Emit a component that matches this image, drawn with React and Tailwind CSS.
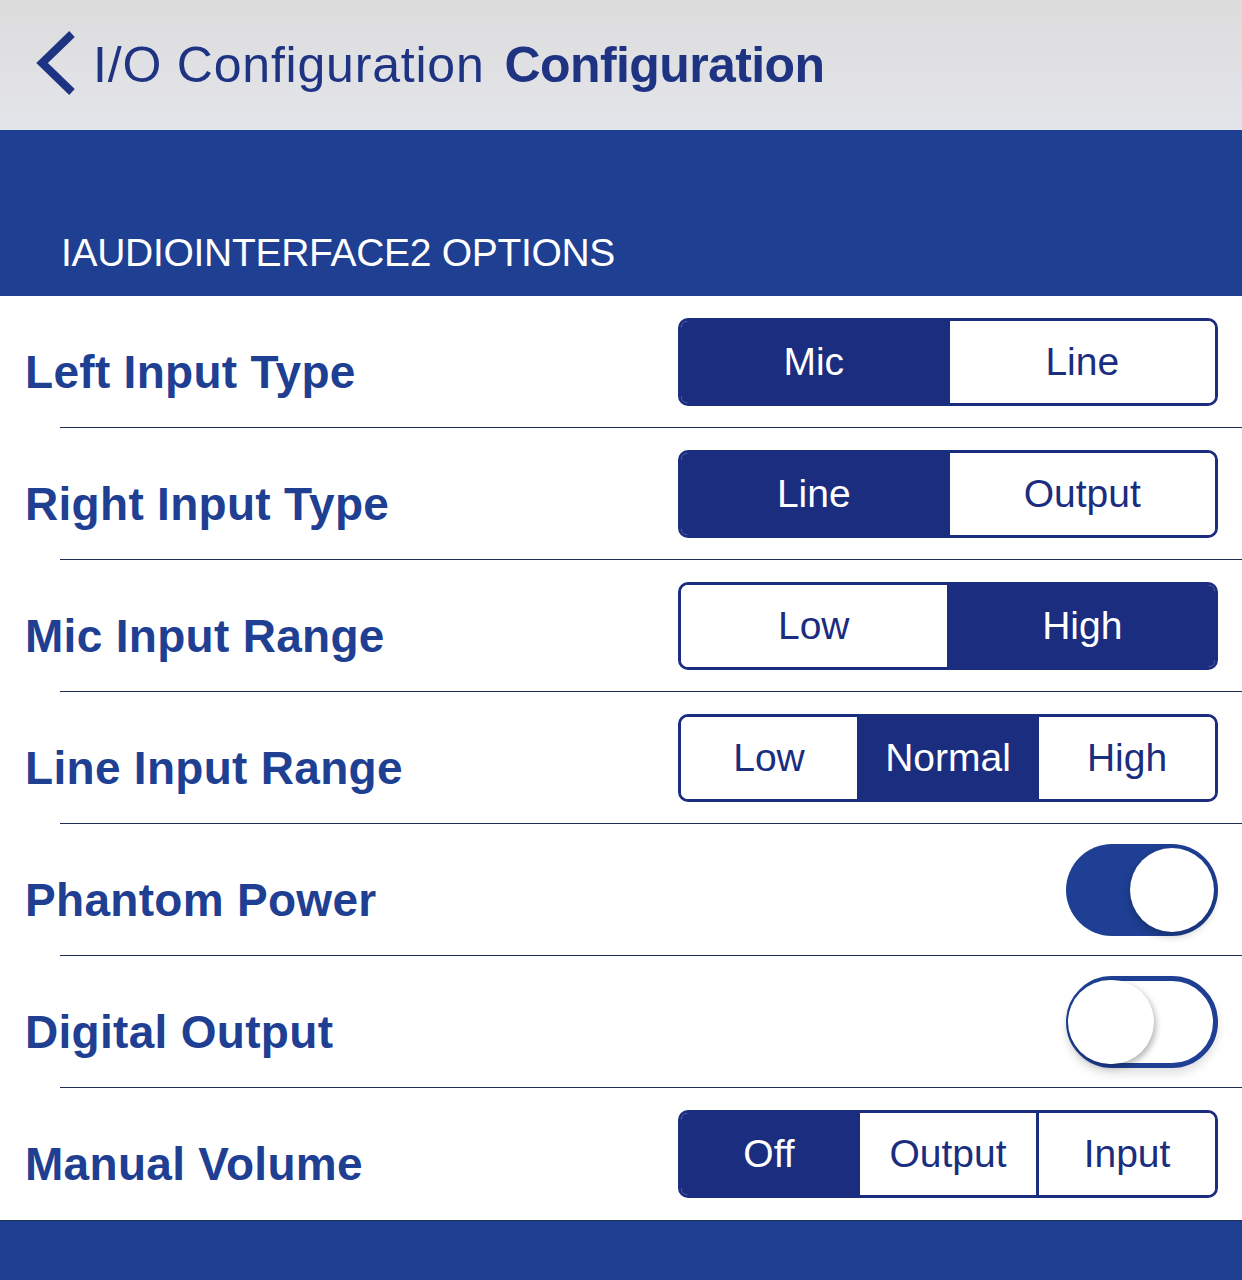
import React from "react";

function Segmented({ options, active }) {
  return (
    <div className="flex h-[88px] w-[540px] overflow-hidden rounded-[10px] border-[3px] border-[#1a2d7f]">
      {options.map((o, i) => (
        <div
          key={o}
          className={
            "flex flex-1 items-center justify-center text-[39px] " +
            (i > 0 ? "border-l-[3px] border-[#1a2d7f] " : "") +
            (i === active ? "bg-[#1a2d7f] text-white" : "bg-white text-[#1a2d7f]")
          }
        >
          {o}
        </div>
      ))}
    </div>
  );
}

function Toggle({ on }) {
  return on ? (
    <div className="flex h-[92px] w-[152px] items-center justify-end rounded-full bg-[#1e3f94] pr-[4px]">
      <div className="h-[84px] w-[84px] rounded-full bg-white shadow-[0_4px_8px_rgba(0,0,0,0.25)]" />
    </div>
  ) : (
    <div className="flex h-[92px] w-[152px] items-center justify-start rounded-full border-[5px] border-[#1e3f94] bg-white shadow-[0_6px_10px_rgba(0,0,0,0.12)]">
      <div className="ml-[-3px] h-[84px] w-[86px] rounded-full bg-white shadow-[2px_3px_6px_rgba(0,0,0,0.3)]" />
    </div>
  );
}

function Row({ label, children, last }) {
  return (
    <div className="relative flex h-[132px] items-center justify-between pl-[25px] pr-[24px]">
      <div className="pt-[20px] text-[46px] font-bold tracking-[0.3px] text-[#1f3f93]">{label}</div>
      <div>{children}</div>
      {!last && <div className="absolute bottom-0 left-[60px] right-0 h-px bg-[#1c2f52]" />}
    </div>
  );
}

export default function App() {
  return (
    <div
      className="flex h-[1280px] w-[1242px] flex-col overflow-hidden bg-white"
      style={{ fontFamily: '"Liberation Sans", Arial, sans-serif' }}
    >
      <div className="flex h-[130px] items-center bg-gradient-to-b from-[#dcdcdd] to-[#e4e5ea] pl-[36px]">
        <svg width="42" height="66" viewBox="0 0 42 66" className="mt-[-4px]">
          <polyline points="36,4 6,33 36,62" fill="none" stroke="#1f3383" strokeWidth="8" strokeLinejoin="miter" />
        </svg>
        <span className="ml-[15px] text-[50px] tracking-[0.8px] text-[#1f3383]">I/O Configuration</span>
        <span className="ml-[20px] text-[50px] font-bold tracking-[-0.6px] text-[#1f3383]">Configuration</span>
      </div>
      <div className="flex h-[166px] items-end bg-[#1f3f93] pb-[24px] pl-[61px]">
        <span className="text-[39px] leading-none tracking-[-0.3px] text-white">IAUDIOINTERFACE2 OPTIONS</span>
      </div>
      <Row label="Left Input Type">
        <Segmented options={["Mic", "Line"]} active={0} />
      </Row>
      <Row label="Right Input Type">
        <Segmented options={["Line", "Output"]} active={0} />
      </Row>
      <Row label="Mic Input Range">
        <Segmented options={["Low", "High"]} active={1} />
      </Row>
      <Row label="Line Input Range">
        <Segmented options={["Low", "Normal", "High"]} active={1} />
      </Row>
      <Row label="Phantom Power">
        <Toggle on />
      </Row>
      <Row label="Digital Output">
        <Toggle on={false} />
      </Row>
      <Row label="Manual Volume" last>
        <Segmented options={["Off", "Output", "Input"]} active={0} />
      </Row>
      <div className="flex-1 border-t border-[#1c2f52] bg-[#1f3f93]" />
    </div>
  );
}
